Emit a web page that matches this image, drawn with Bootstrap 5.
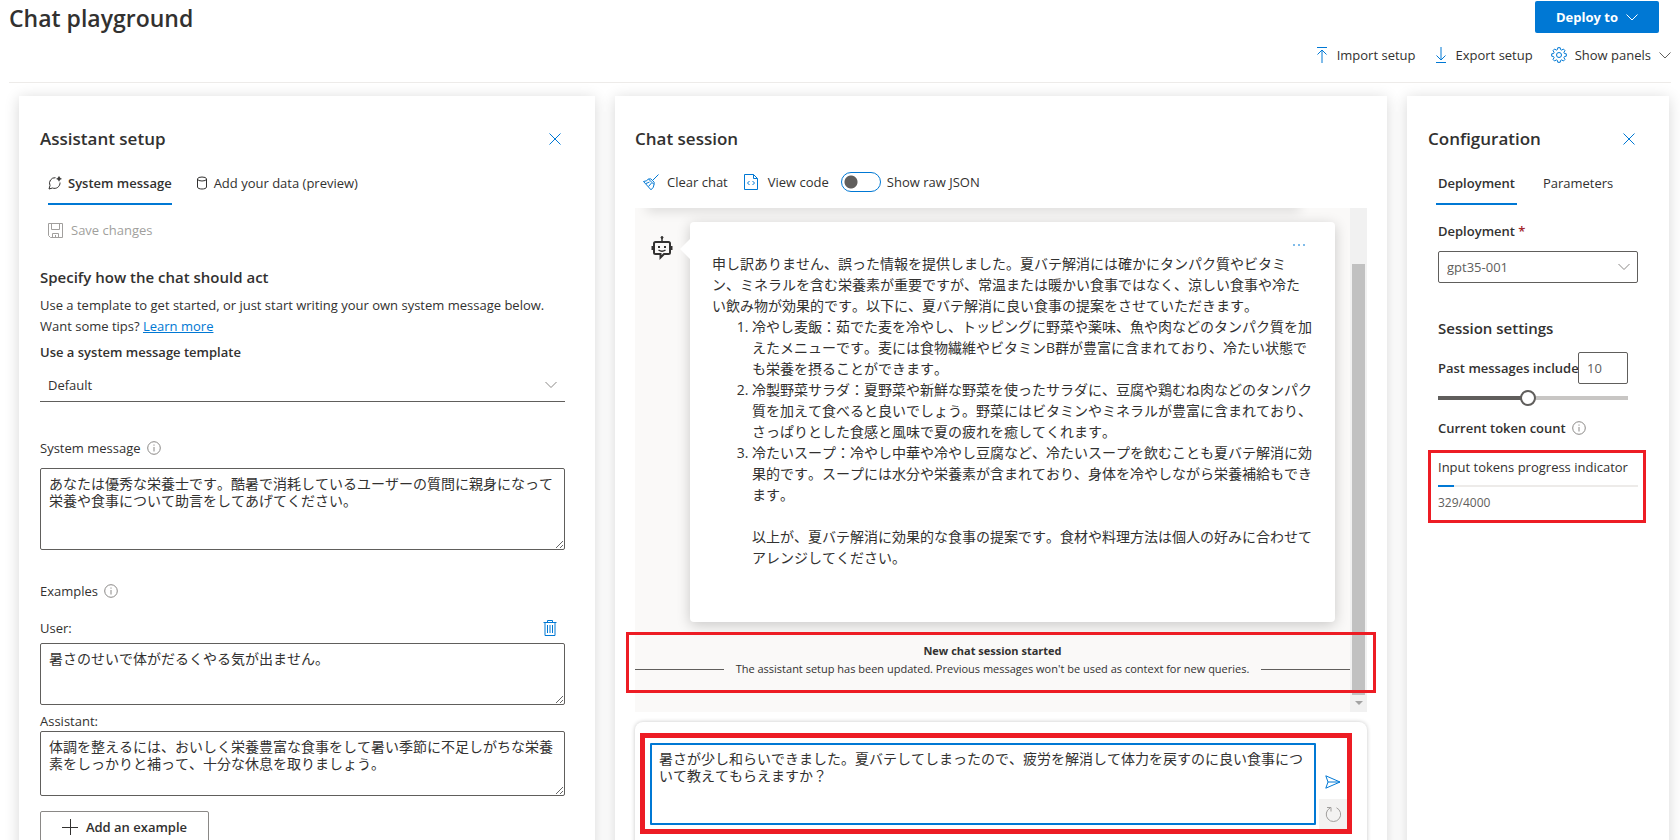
<!DOCTYPE html>
<html lang="en">
<head>
<meta charset="utf-8">
<meta name="viewport" content="width=device-width, initial-scale=1">
<title>Chat playground</title>
<link href="https://cdn.jsdelivr.net/npm/bootstrap@5.3.0/dist/css/bootstrap.min.css" rel="stylesheet">
<style>
  :root { --blue: #0078d4; --ink: #323130; --edge: #605e5c; --mark: #ed1c24; }
  body { font-family: "Open Sans", "Noto Sans CJK JP", sans-serif; font-size: 13px; line-height: 20px; color: var(--ink); background: #fff; }
  svg { display: block; flex: none; fill: none; stroke: currentColor; stroke-width: 1; }
  button, .btn { font-size: 13px; line-height: 20px; color: inherit; }
  .top-bar { margin: 0 9px; height: 83px; border-bottom: 1px solid #edebe9; }
  .page-title { font-size: 23px; line-height: 36px; font-weight: 600; }
  .btn-deploy { width: 124px; height: 32px; margin: 1px 12px 0 0; background: var(--blue); color: #fff; border-radius: 2px; font-weight: 700; }
  .btn-deploy:hover { background: #106ebe; color: #fff; }
  .cmd { background: none; border: 0; padding: 0; display: flex; align-items: center; }
  .panels { display: grid; grid-template-columns: minmax(0, 576fr) minmax(0, 772fr) minmax(0, 262fr); gap: 20px; padding: 13px 11px 0 19px; }
  .pane { background: #fff; box-shadow: 0 2px 14px rgba(0,0,0,.16); padding: 31px 30px 0 21px; }
  .pane-chat { padding: 31px 20px 0; }
  .pane-config { padding-right: 31px; }
  .pane-title { font-size: 17px; line-height: 24px; font-weight: 600; margin: 0; }
  .sub-title { font-size: 15px; line-height: 22px; font-weight: 600; margin: 0; }
  .blue { color: var(--blue); }
  .info { color: #8a8886; }
  .tab { background: none; border: 0; border-bottom: 2px solid transparent; padding: 2px 0 0; height: 44px; display: flex; align-items: center; gap: 6px; }
  .tab.active { border-color: var(--blue); font-weight: 600; }
  .pane-config .tab { padding: 2px 2px 0; }
  .template-select { height: 34px; border: 0; border-bottom: 1px solid var(--edge); background: transparent; padding: 0 8px 0 8px; appearance: none; width: 100%; color: inherit; }
  .select-wrap { position: relative; }
  .select-wrap svg { position: absolute; right: 8px; top: 50%; transform: translateY(-50%); pointer-events: none; color: #8a8886; }
  .box-select { height: 32px; border: 1px solid var(--edge); border-radius: 2px; background: transparent; padding: 0 8px; appearance: none; width: 100%; color: var(--edge); }
  .text-area, .bubble { font-kerning: none; text-spacing-trim: space-all; }
  .text-area { display: block; width: 100%; border: 1px solid var(--edge); border-radius: 2px; padding: 6px 8px; font-size: 14px; line-height: 17px; color: inherit; resize: vertical; outline: 0; }
  .example-btn { width: 169px; height: 32px; border: 1px solid #8a8886; border-radius: 2px; background: #fff; font-weight: 600; gap: 8px; }
  .switch-track { appearance: none; width: 40px; height: 20px; border: 1px solid var(--blue); border-radius: 10px; margin: 0; background: radial-gradient(circle at 9px 9px, var(--edge) 6px, transparent 7px); }
  .log { background: #faf9f8; }
  .log-body { min-width: 0; overflow: hidden; padding: 14px 0 34px; position: relative; }
  .log-body::before { content: ""; position: absolute; top: -10px; left: 12px; right: 50px; height: 10px; box-shadow: 0 3px 12px rgba(0,0,0,.14); }
  .robot { width: 55px; padding: 14px 0 0 16px; }
  .bubble { position: relative; background: #fff; border-radius: 4px; box-shadow: 0 3px 14px rgba(0,0,0,.2); margin-right: 15px; padding: 31px 22px 54px; font-size: 14px; line-height: 21px; }
  .bubble::before { content: ""; position: absolute; left: -10px; top: 17px; border: solid transparent; border-width: 10px 10px 10px 0; border-right-color: #fff; }
  .bubble ol { margin: 0; padding-left: 40px; }
  .more { position: absolute; top: 15px; right: 29px; background: none; border: 0; padding: 0; height: 16px; }
  .notice { font-size: 11px; line-height: 18px; margin-top: 20px; text-align: center; }
  .notice hr { margin: 0; border-top: 1px solid #605e5c; opacity: 1; }
  .bar { width: 17px; background: #f1f1f1; padding: 56px 2px 0; }
  .bar-thumb { background: #c1c1c1; }
  .mark-box { position: absolute; border: 3px solid var(--mark); pointer-events: none; }
  .mark-log { left: -9px; right: -9px; bottom: 19px; height: 61px; }
  .mark-input { left: 5px; right: 15px; top: 11px; height: 101px; border-width: 5px; }
  .mark-token { inset: -7px -8px -12px -10px; }
  .composer { position: relative; margin-top: 10px; padding: 21px 20px 40px 15px; border-radius: 8px; box-shadow: 0 0 4px rgba(0,0,0,.22); gap: 3px; }
  .composer .text-area { height: 82px; border: 2px solid var(--blue); padding: 5px 7px; resize: none; border-radius: 1px; }
  .side-btn { width: 28px; height: 30px; border: 0; padding: 0; background: none; display: flex; align-items: center; justify-content: center; }
  .config-body { padding-left: 10px; }
  .num-box { width: 50px; height: 32px; border: 1px solid var(--edge); border-radius: 2px; padding: 0 8px; color: var(--edge); flex: none; background: #fff; }
  .range { appearance: none; display: block; height: 16px; width: 100%; margin: 6px 0 12px; background: linear-gradient(90deg, var(--edge) 47%, #c8c6c4 47%) center / 100% 4px no-repeat; }
  .range::-webkit-slider-thumb { appearance: none; width: 16px; height: 16px; border: 2px solid var(--edge); border-radius: 50%; background: #fff; }
  .token-bar { height: 2px; border-radius: 0; background: #edebe9; margin: 8px 0; }
  .small-note { font-size: 12px; line-height: 16px; color: var(--edge); }
</style>
</head>
<body class="vh-100 overflow-hidden d-flex flex-column">
<svg class="d-none" aria-hidden="true">
  <symbol id="i-close" viewBox="0 0 12 12"><path d="M.5.5l11 11M11.5.5l-11 11"/></symbol>
  <symbol id="i-chev" viewBox="0 0 12 7"><path d="M.5.5L6 6l5.500-5.500"/></symbol>
  <symbol id="i-info" viewBox="0 0 14 14"><circle cx="7" cy="7" r="6.300"/><path d="M7 6v4.500M7 3.500v1.200"/></symbol>
</svg>

<header class="top-bar d-flex justify-content-between flex-shrink-0">
  <h1 class="page-title m-0">Chat playground</h1>
  <div class="d-flex flex-column align-items-end">
    <button class="btn btn-deploy d-flex align-items-center justify-content-center gap-2 border-0 p-0">Deploy to <svg width="12" height="7"><use href="#i-chev"/></svg></button>
    <div class="d-flex mt-2 pt-1" style="gap:18px">
      <button class="cmd"><svg class="blue me-2" width="14" height="16" viewBox="0 0 14 16"><path d="M2 .5h10M7 3v13M2.500 7.500L7 3l4.500 4.500"/></svg>Import setup</button>
      <button class="cmd"><svg class="blue me-2" width="14" height="16" viewBox="0 0 14 16"><path d="M2 15.500h10M7 0v13M2.500 8.500L7 13l4.500-4.500"/></svg>Export setup</button>
      <button class="cmd"><svg class="blue me-2" width="16" height="16" viewBox="0 0 16 16"><path d="M6.800.7h2.400l.4 1.900 1.100.5 1.700-1.100 1.600 1.700-1.100 1.600.5 1.200 1.900.3v2.400l-1.900.4-.5 1.100 1.100 1.700-1.600 1.600-1.700-1.100-1.100.5-.4 1.900H6.800l-.4-1.900-1.100-.5L3.600 14 2 12.400l1.100-1.700-.5-1.100-1.900-.4V6.800l1.900-.3.500-1.200L2 3.700 3.600 2l1.700 1.100 1.100-.5z"/><circle cx="8" cy="8" r="2.500"/></svg>Show panels<svg class="ms-2" width="12" height="7" style="color:#605e5c"><use href="#i-chev"/></svg></button>
    </div>
  </div>
</header>

<main class="panels flex-grow-1">
  <section class="pane">
    <div class="d-flex justify-content-between align-items-center">
      <h2 class="pane-title">Assistant setup</h2>
      <button class="cmd blue me-1" aria-label="Close"><svg width="12" height="12"><use href="#i-close"/></svg></button>
    </div>
    <div class="d-flex ps-2 gap-4" style="margin-top:10px">
      <button class="tab active"><svg width="14" height="14" viewBox="0 0 14 14"><path d="M7.500 1.700A5.500 5.500 0 0 0 2 9.500L1 13l3.500-1A5.500 5.500 0 0 0 12 6.500M11 .3v5M8.500 2.800h5M10 1.800h2v2h-2z"/></svg>System message</button>
      <button class="tab"><svg width="12" height="14" viewBox="0 0 12 14"><ellipse cx="6" cy="3" rx="4.500" ry="2"/><path d="M1.500 3v8c0 2.700 9 2.700 9 0V3"/></svg>Add your data (preview)</button>
    </div>
    <button class="cmd ps-2 gap-2" style="height:32px;margin-top:9px;color:#a19f9d" disabled><svg width="15" height="15" viewBox="0 0 15 15"><path d="M.5.500h14v14H2.500l-2-2zM3.500.5v6h8v-6M4.500 14.500v-4h6v4M7.500 12v2.500"/></svg>Save changes</button>
    <h3 class="sub-title" style="margin-top:20px">Specify how the chat should act</h3>
    <p class="mb-0" style="margin-top:7px;line-height:21px">Use a template to get started, or just start writing your own system message below. Want some tips? <a href="#" class="blue">Learn more</a></p>
    <label class="d-block fw-semibold" for="tpl" style="margin:5px 0 6px">Use a system message template</label>
    <div class="select-wrap">
      <select id="tpl" class="template-select"><option>Default</option></select>
      <svg width="12" height="7"><use href="#i-chev"/></svg>
    </div>
    <label class="d-flex align-items-center" for="sys" style="margin:36px 0 10px;gap:6px">System message <svg class="info" width="14" height="14"><use href="#i-info"/></svg></label>
    <textarea id="sys" class="text-area" style="height:82px">あなたは優秀な栄養士です。酷暑で消耗しているユーザーの質問に親身になって栄養や食事について助言をしてあげてください。</textarea>
    <div class="d-flex align-items-center" style="margin-top:31px;gap:6px">Examples <svg class="info" width="14" height="14"><use href="#i-info"/></svg></div>
    <div class="d-flex justify-content-between" style="margin:17px 0 5px">
      <label for="ex-user">User:</label>
      <button class="cmd blue me-2" aria-label="Delete example"><svg width="14" height="16" viewBox="0 0 14 16"><path d="M.5 2.500h13M4.500 2.500v-2h5v2M2 2.500v13h10v-13M4.500 5v8M7 5v8M9.500 5v8"/></svg></button>
    </div>
    <textarea id="ex-user" class="text-area" style="height:62px">暑さのせいで体がだるくやる気が出ません。</textarea>
    <label class="d-block" for="ex-asst" style="margin-top:6px">Assistant:</label>
    <textarea id="ex-asst" class="text-area" style="height:65px">体調を整えるには、おいしく栄養豊富な食事をして暑い季節に不足しがちな栄養素をしっかりと補って、十分な休息を取りましょう。</textarea>
    <button class="example-btn d-flex align-items-center justify-content-center" style="margin-top:15px"><svg width="16" height="16" viewBox="0 0 16 16"><path d="M0 8.500h16M8.500 0v16"/></svg>Add an example</button>
  </section>

  <section class="pane pane-chat">
    <h2 class="pane-title">Chat session</h2>
    <div class="d-flex align-items-center ps-2" style="height:32px;margin:15px 0 10px">
      <button class="cmd gap-2 me-3"><svg class="blue" width="16" height="17" viewBox="0 0 16 17"><path d="M15.500.5L9.500 6.500M5.500 5l5.500 5.500M5.500 5Q3.500 7.500.5 7.500L8 15.800Q11 13.500 11 10.500M5.500 5Q8 4 9.500 6.500 12 8 11 10.500M3 9.500l3.500-1.500M5.500 12.500L8.500 9"/></svg>Clear chat</button>
      <button class="cmd me-2" style="gap:10px"><svg class="blue" width="14" height="16" viewBox="0 0 14 16"><path d="M.5.500h9l4 4v11H.5zM9.500.5v4h4M5.500 7L3.500 9l2 2M8.500 7l2 2-2 2"/></svg>View code</button>
      <label class="d-flex align-items-center ms-1" style="gap:6px"><input class="switch-track" type="checkbox" role="switch">Show raw JSON</label>
    </div>
    <div class="log d-flex position-relative">
      <div class="log-body flex-grow-1">
        <div class="d-flex">
          <div class="robot flex-shrink-0"><svg width="22" height="24" viewBox="0 0 22 24"><path stroke-width="2" d="M4.500 6h13q1.500 0 1.500 1.500v9q0 1.500-1.500 1.500H13l-3.500 3.500V18h-5Q3 18 3 16.500v-9Q3 6 4.500 6z"/><path stroke-width="1.500" d="M11 6V2"/><circle cx="11" cy="1.500" r="1" fill="currentColor"/><path stroke-width="2" d="M1.500 10v4M20.500 10v4M7 11h2M13 11h2"/><path stroke-width="1.500" d="M7.500 14q3.500 2.500 7 0"/></svg></div>
          <article class="bubble flex-grow-1">
            <button class="more blue" aria-label="More"><svg width="14" height="2" viewBox="0 0 14 2" stroke-width="2"><path d="M1 1h2M6 1h2M11 1h2"/></svg></button>
            <p class="m-0">申し訳ありません、誤った情報を提供しました。夏バテ解消には確かにタンパク質やビタミン、ミネラルを含む栄養素が重要ですが、常温または暖かい食事ではなく、涼しい食事や冷たい飲み物が効果的です。以下に、夏バテ解消に良い食事の提案をさせていただきます。</p>
            <ol>
              <li>冷やし麦飯：茹でた麦を冷やし、トッピングに野菜や薬味、魚や肉などのタンパク質を加えたメニューです。麦には食物繊維やビタミンB群が豊富に含まれており、冷たい状態でも栄養を摂ることができます。</li>
              <li>冷製野菜サラダ：夏野菜や新鮮な野菜を使ったサラダに、豆腐や鶏むね肉などのタンパク質を加えて食べると良いでしょう。野菜にはビタミンやミネラルが豊富に含まれており、さっぱりとした食感と風味で夏の疲れを癒してくれます。</li>
              <li>冷たいスープ：冷やし中華や冷やし豆腐など、冷たいスープを飲むことも夏バテ解消に効果的です。スープには水分や栄養素が含まれており、身体を冷やしながら栄養補給もできます。<br><br>以上が、夏バテ解消に効果的な食事の提案です。食材や料理方法は個人の好みに合わせてアレンジしてください。</li>
            </ol>
          </article>
        </div>
        <div class="notice">
          <div class="fw-bold">New chat session started</div>
          <div class="d-flex align-items-center" style="gap:12px"><hr class="flex-grow-1"><span>The assistant setup has been updated. Previous messages won't be used as context for new queries.</span><hr class="flex-grow-1"></div>
        </div>
      </div>
      <div class="bar d-flex flex-column flex-shrink-0" aria-hidden="true">
        <div class="bar-thumb flex-grow-1"></div>
        <svg class="mx-auto" width="8" height="17" viewBox="0 0 8 17" style="fill:#a3a3a3;stroke:none"><path d="M0 6h8L4 10z"/></svg>
      </div>
      <div class="mark-box mark-log"></div>
    </div>
    <div class="composer d-flex">
      <textarea class="text-area flex-grow-1" aria-label="User message">暑さが少し和らいできました。夏バテしてしまったので、疲労を解消して体力を戻すのに良い食事について教えてもらえますか？</textarea>
      <div class="d-flex flex-column" style="gap:2px;padding-top:24px">
        <button class="side-btn blue" aria-label="Send"><svg width="16" height="14" viewBox="0 0 16 14"><path d="M.8.800L15 7 .8 13.200 3 7zM3 7h12"/></svg></button>
        <button class="side-btn" aria-label="Regenerate" style="background:#f3f2f1;color:#a19f9d"><svg width="17" height="17" viewBox="0 0 17 17" stroke-width="1.500"><path d="M11.500 1.800A7.200 7.200 0 1 1 5 2M2 1.500h4v4"/></svg></button>
      </div>
      <div class="mark-box mark-input"></div>
    </div>
  </section>

  <section class="pane pane-config">
    <div class="d-flex justify-content-between align-items-center">
      <h2 class="pane-title">Configuration</h2>
      <button class="cmd blue" style="margin-right:3px" aria-label="Close"><svg width="12" height="12"><use href="#i-close"/></svg></button>
    </div>
    <div class="d-flex ps-2 gap-4" style="margin-top:10px">
      <button class="tab active">Deployment</button>
      <button class="tab">Parameters</button>
    </div>
    <div class="config-body">
      <label class="d-block fw-semibold" for="dep" style="margin:16px 0 10px">Deployment <span style="color:#a4262c">*</span></label>
      <div class="select-wrap">
        <select id="dep" class="box-select"><option>gpt35-001</option></select>
        <svg width="12" height="7"><use href="#i-chev"/></svg>
      </div>
      <h3 class="sub-title" style="margin:34px 0 13px">Session settings</h3>
      <div style="margin-right:10px">
        <div class="d-flex align-items-center">
          <label class="fw-semibold text-nowrap overflow-hidden flex-grow-1" style="width:0" for="past">Past messages include</label>
          <input id="past" class="num-box" type="text" value="10">
        </div>
        <input class="range" type="range" min="1" max="20" value="10" aria-label="Past messages included">
      </div>
      <div class="d-flex align-items-center fw-semibold" style="gap:6px;margin-bottom:19px">Current token count <svg class="info" width="14" height="14"><use href="#i-info"/></svg></div>
      <div class="position-relative">
        <div class="text-nowrap">Input tokens progress indicator</div>
        <div class="progress token-bar" role="progressbar" aria-label="Input tokens" aria-valuenow="329" aria-valuemin="0" aria-valuemax="4000"><div class="progress-bar" style="width:8.2%;background:#0078d4"></div></div>
        <div class="small-note">329/4000</div>
        <div class="mark-box mark-token"></div>
      </div>
    </div>
  </section>
</main>
<script src="https://cdn.jsdelivr.net/npm/bootstrap@5.3.0/dist/js/bootstrap.bundle.min.js"></script>
</body>
</html>
